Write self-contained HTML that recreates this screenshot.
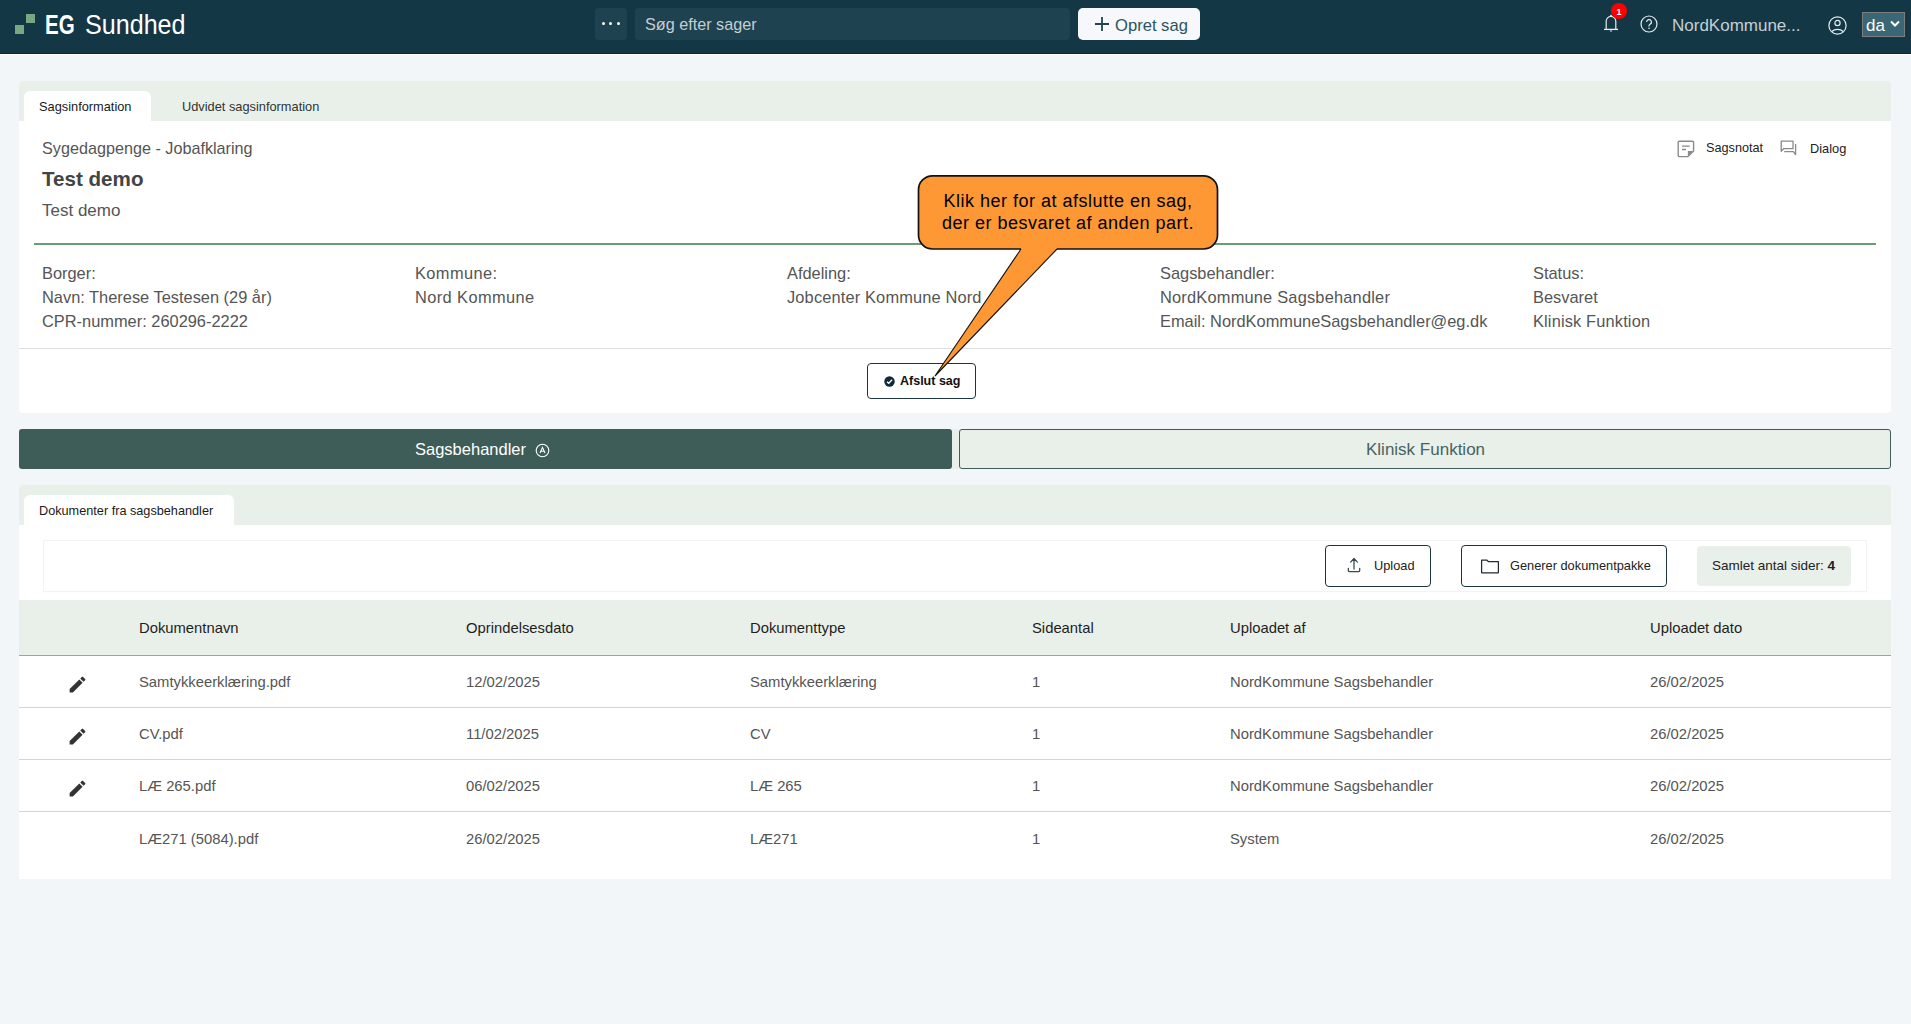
<!DOCTYPE html>
<html><head><meta charset="utf-8">
<style>
*{margin:0;padding:0;box-sizing:border-box}
html,body{width:1911px;height:1024px;overflow:hidden;background:#f2f6f9;font-family:"Liberation Sans",sans-serif;color:#555}
.a{position:absolute;white-space:nowrap}
#hdr{position:absolute;left:0;top:0;width:1911px;height:54px;background:#143746;border-bottom:1px solid #052a38}
#hl{position:absolute;left:0;top:54px;width:1911px;height:1px;background:#fdfeff}
.sq{position:absolute;width:9px;height:9px;background:#78a882}
.card{position:absolute;left:19px;width:1872px;background:#fff;border-radius:4px;overflow:hidden}
.strip{position:absolute;left:0;top:0;width:100%;height:40px;background:#e9f0ea}
.tab{position:absolute;background:#fff;border-radius:6px 6px 0 0}
.t13{font-size:12.8px;line-height:15px}
.t16{font-size:16.4px;line-height:20px}
.th{font-size:14.8px;color:#1e1e1e;line-height:18px}
.td{font-size:14.8px;color:#555;line-height:18px}
.sep{position:absolute;left:0;width:1872px;height:1px;background:#d4d4d4}
</style></head><body>

<div id="hl"></div>
<div id="hdr">
  <div class="sq" style="left:15px;top:25px"></div>
  <div class="sq" style="left:26px;top:14px"></div>
  <div class="a" style="left:45px;top:10px;font-size:27px;line-height:30px;color:#fff;font-weight:bold;transform:scaleX(0.76);transform-origin:0 0">EG</div>
  <div class="a" style="left:85px;top:10px;font-size:27px;line-height:30px;color:#fff;transform:scaleX(0.93);transform-origin:0 0">Sundhed</div>

  <div class="a" style="left:595px;top:8px;width:32px;height:32px;background:#1f4250;border-radius:4px"></div>
  <div class="a" style="left:602px;top:22px;width:3px;height:3px;background:#fff;border-radius:50%"></div>
  <div class="a" style="left:609px;top:22px;width:3px;height:3px;background:#fff;border-radius:50%"></div>
  <div class="a" style="left:617px;top:22px;width:3px;height:3px;background:#fff;border-radius:50%"></div>

  <div class="a" style="left:635px;top:8px;width:435px;height:32px;background:#1f4250;border-radius:4px"></div>
  <div class="a" style="left:645px;top:14px;font-size:16.2px;line-height:20px;color:#c4cfd3">Søg efter sager</div>

  <div class="a" style="left:1078px;top:8px;width:122px;height:32px;background:#f6f8fb;border-radius:5px"></div>
  <svg class="a" style="left:1094px;top:16px" width="16" height="16" viewBox="0 0 16 16"><path d="M8 1v14M1 8h14" stroke="#1e4550" stroke-width="1.8"/></svg>
  <div class="a" style="left:1115px;top:16px;font-size:16.6px;line-height:20px;color:#2c5560">Opret sag</div>

  <!-- bell -->
  <svg class="a" style="left:1602px;top:13px" width="18" height="21" viewBox="0 0 18 21"><path d="M4.2 16.2V8.2a4.8 4.8 0 0 1 9.6 0V16.2" fill="none" stroke="#e6ecee" stroke-width="1.2"/><path d="M2 16.4h14" stroke="#e6ecee" stroke-width="1.3"/><circle cx="9" cy="2.6" r="0.9" fill="#e6ecee"/><path d="M7.6 17.6h2.8L9 19z" fill="#e6ecee"/></svg>
  <div class="a" style="left:1611px;top:3px;width:16px;height:16px;border-radius:50%;background:#fd0000"></div>
  <div class="a" style="left:1611px;top:5px;width:16px;text-align:center;font-size:9px;line-height:14px;color:#fff;font-weight:bold">1</div>
  <!-- help -->
  <svg class="a" style="left:1640px;top:15px" width="18" height="18" viewBox="0 0 18 18"><circle cx="9" cy="9" r="8" fill="none" stroke="#e6ecee" stroke-width="1.2"/><path d="M6.6 7a2.4 2.4 0 1 1 3.4 2.2c-.7.4-1 .8-1 1.6v.6" fill="none" stroke="#e6ecee" stroke-width="1.2"/><circle cx="9" cy="13.3" r=".8" fill="#e6ecee"/></svg>
  <div class="a" style="left:1672px;top:16px;font-size:17px;line-height:20px;color:#c4cfd3">NordKommune...</div>
  <!-- user -->
  <svg class="a" style="left:1828px;top:16px" width="19" height="19" viewBox="0 0 19 19"><circle cx="9.5" cy="9.5" r="8.6" fill="none" stroke="#e6ecee" stroke-width="1.2"/><circle cx="9.5" cy="7" r="2.6" fill="none" stroke="#e6ecee" stroke-width="1.2"/><path d="M4 15.5a6.5 4.5 0 0 1 11 0" fill="none" stroke="#e6ecee" stroke-width="1.2"/></svg>
  <!-- lang -->
  <div class="a" style="left:1862px;top:12px;width:43px;height:25px;background:#3b6676;border:1px solid #7d7d7d"></div>
  <div class="a" style="left:1866px;top:16px;font-size:17px;line-height:20px;color:#fff">da</div>
  <svg class="a" style="left:1890px;top:20px" width="10" height="8" viewBox="0 0 10 8"><path d="M1 1.5l4 4 4-4" fill="none" stroke="#fff" stroke-width="2"/></svg>
</div>

<!-- CARD 1 -->
<div class="card" style="top:81px;height:332px">
  <div class="strip"></div>
  <div class="tab" style="left:5px;top:10px;width:127px;height:30px"></div>
  <div class="a t13" style="left:20px;top:18px;color:#1a1a1a">Sagsinformation</div>
  <div class="a t13" style="left:163px;top:18px;color:#333">Udvidet sagsinformation</div>

  <div class="a" style="left:23px;top:57px;font-size:16.2px;line-height:20px;color:#555">Sygedagpenge - Jobafklaring</div>
  <div class="a" style="left:23px;top:86px;font-size:20.6px;line-height:24px;color:#444;font-weight:bold">Test demo</div>
  <div class="a" style="left:23px;top:120px;font-size:17px;line-height:20px;color:#555">Test demo</div>

  <!-- sagsnotat -->
  <svg class="a" style="left:1658px;top:59px" width="18" height="18" viewBox="0 0 18 18"><path d="M2.5 1.2H15.3a1.3 1.3 0 0 1 1.3 1.3V11L10.9 16.6H2.5a1.3 1.3 0 0 1-1.3-1.3V2.5a1.3 1.3 0 0 1 1.3-1.3z" fill="none" stroke="#8a8a8a" stroke-width="1.4" stroke-linejoin="round"/><path d="M16.6 11H10.9V16.6z" fill="#8a8a8a"/><path d="M5 6.2H12.7M5 9.5H9" stroke="#8a8a8a" stroke-width="1.3"/></svg>
  <div class="a t13" style="left:1687px;top:60px;color:#222;font-size:12.7px">Sagsnotat</div>
  <svg class="a" style="left:1761px;top:59px" width="18" height="18" viewBox="0 0 18 18"><path d="M1.2 1.2H13V8.7H3.6L1.2 11.2Z" fill="none" stroke="#8a8a8a" stroke-width="1.3" stroke-linejoin="round"/><path d="M4.2 11.7H13.4L15.6 14.6V4" fill="none" stroke="#8a8a8a" stroke-width="1.3" stroke-linejoin="round"/></svg>
  <div class="a t13" style="left:1791px;top:60px;color:#222">Dialog</div>

  <div class="a" style="left:15px;top:162px;width:1842px;height:2px;background:#6b9e6e"></div>

  <div class="a t16" style="left:23px;top:180px;line-height:24px">Borger:<br>Navn: Therese Testesen (29 år)<br>CPR-nummer: 260296-2222</div>
  <div class="a t16" style="left:396px;top:180px;line-height:24px;letter-spacing:0.4px">Kommune:<br>Nord Kommune</div>
  <div class="a t16" style="left:768px;top:180px;line-height:24px">Afdeling:<br><span style="letter-spacing:0.15px">Jobcenter Kommune Nord</span></div>
  <div class="a t16" style="left:1141px;top:180px;line-height:24px">Sagsbehandler:<br><span style="letter-spacing:0.2px">NordKommune Sagsbehandler</span><br>Email: NordKommuneSagsbehandler@eg.dk</div>
  <div class="a t16" style="left:1514px;top:180px;line-height:24px">Status:<br>Besvaret<br><span style="letter-spacing:0.15px">Klinisk Funktion</span></div>

  <div class="a" style="left:0;top:267px;width:1872px;height:1px;background:#dde0e3"></div>

  <div class="a" style="left:848px;top:282px;width:109px;height:36px;border:1px solid #1b3440;border-radius:4px;background:#fff"></div>
  <svg class="a" style="left:865px;top:295px" width="11" height="11" viewBox="0 0 11 11"><circle cx="5.5" cy="5.5" r="5.2" fill="#0f2a35"/><path d="M3 5.7l1.7 1.6 3.4-3.5" fill="none" stroke="#fff" stroke-width="1.3"/></svg>
  <div class="a" style="left:881px;top:293px;font-size:12.5px;line-height:15px;color:#111;font-weight:bold">Afslut sag</div>
</div>

<!-- toggle buttons -->
<div class="a" style="left:19px;top:429px;width:1872px;height:40px;background:#e9f0ea;border-radius:3px"></div>
<div class="a" style="left:19px;top:429px;width:933px;height:40px;background:#3f5d58;border-radius:3px"></div>
<div class="a" style="left:415px;top:439px;font-size:16.5px;line-height:20px;color:#fff">Sagsbehandler</div>
<svg class="a" style="left:535px;top:443px" width="15" height="15" viewBox="0 0 15 15"><circle cx="7.5" cy="7.5" r="6.3" fill="none" stroke="#fff" stroke-width="1.1"/><path d="M5 10l2.5-5.5L10 10M5.9 8.3h3.2" fill="none" stroke="#fff" stroke-width="1.1"/></svg>
<div class="a" style="left:959px;top:429px;width:932px;height:40px;background:#e9f0ea;border:1px solid #3f5d58;border-radius:3px"></div>
<div class="a" style="left:1366px;top:440px;font-size:17px;line-height:20px;color:#47635f">Klinisk Funktion</div>

<!-- CARD 2 -->
<div class="card" style="top:485px;height:394px;border-radius:4px 4px 0 0">
  <div class="strip"></div>
  <div class="tab" style="left:5px;top:10px;width:210px;height:30px"></div>
  <div class="a t13" style="left:20px;top:19px;color:#1a1a1a;font-size:12.7px">Dokumenter fra sagsbehandler</div>

  <div class="a" style="left:24px;top:55px;width:1824px;height:52px;border:1px solid #f1f4f7"></div>

  <div class="a" style="left:1306px;top:60px;width:106px;height:42px;border:1px solid #1b3440;border-radius:4px"></div>
  <svg class="a" style="left:1327px;top:71px" width="16" height="17" viewBox="0 0 16 17"><path d="M8 2.6V13M4.6 6.1L8 2.5l3.4 3.6M2.3 12.3v2.2a1 1 0 0 0 1 1h9.4a1 1 0 0 0 1-1v-2.2" fill="none" stroke="#34484e" stroke-width="1.25" stroke-linecap="round" stroke-linejoin="round"/></svg>
  <div class="a t13" style="left:1355px;top:73px;color:#222">Upload</div>

  <div class="a" style="left:1442px;top:60px;width:206px;height:42px;border:1px solid #1b3440;border-radius:4px"></div>
  <svg class="a" style="left:1461px;top:74px" width="20" height="15" viewBox="0 0 20 15"><path d="M1.6 1.2H7l1.6 1.5h9.8v10.6a.6.6 0 0 1-.6.6H2.2a.6.6 0 0 1-.6-.6z" fill="none" stroke="#1f2d33" stroke-width="1.25" stroke-linejoin="round"/></svg>
  <div class="a t13" style="left:1491px;top:73px;color:#222">Generer dokumentpakke</div>

  <div class="a" style="left:1678px;top:61px;width:154px;height:40px;background:#e9f0ea;border-radius:4px"></div>
  <div class="a t13" style="left:1693px;top:73px;color:#222;font-size:13.5px">Samlet antal sider: <b>4</b></div>

  <div class="a" style="left:0;top:115px;width:1872px;height:56px;background:#e9f0ea;border-bottom:1px solid #8cb08f"></div>
  <div class="a th" style="left:120px;top:134px">Dokumentnavn</div>
  <div class="a th" style="left:447px;top:134px">Oprindelsesdato</div>
  <div class="a th" style="left:731px;top:134px">Dokumenttype</div>
  <div class="a th" style="left:1013px;top:134px">Sideantal</div>
  <div class="a th" style="left:1211px;top:134px">Uploadet af</div>
  <div class="a th" style="left:1631px;top:134px">Uploadet dato</div>

  <div class="sep" style="top:222px"></div>
  <div class="sep" style="top:274px"></div>
  <div class="sep" style="top:326px"></div>
  <svg class="a" style="left:48px;top:189px" width="21" height="21" viewBox="0 0 24 24"><path d="M3 17.25V21h3.75L17.81 9.94l-3.75-3.75L3 17.25zM20.71 7.04a1 1 0 0 0 0-1.41l-2.34-2.34a1 1 0 0 0-1.41 0l-1.83 1.83 3.75 3.75 1.83-1.83z" fill="#333"/></svg>
  <div class="a td" style="left:120px;top:188px">Samtykkeerklæring.pdf</div>
  <div class="a td" style="left:447px;top:188px">12/02/2025</div>
  <div class="a td" style="left:731px;top:188px">Samtykkeerklæring</div>
  <div class="a td" style="left:1013px;top:188px">1</div>
  <div class="a td" style="left:1211px;top:188px">NordKommune Sagsbehandler</div>
  <div class="a td" style="left:1631px;top:188px">26/02/2025</div>
  <svg class="a" style="left:48px;top:241px" width="21" height="21" viewBox="0 0 24 24"><path d="M3 17.25V21h3.75L17.81 9.94l-3.75-3.75L3 17.25zM20.71 7.04a1 1 0 0 0 0-1.41l-2.34-2.34a1 1 0 0 0-1.41 0l-1.83 1.83 3.75 3.75 1.83-1.83z" fill="#333"/></svg>
  <div class="a td" style="left:120px;top:240px">CV.pdf</div>
  <div class="a td" style="left:447px;top:240px">11/02/2025</div>
  <div class="a td" style="left:731px;top:240px">CV</div>
  <div class="a td" style="left:1013px;top:240px">1</div>
  <div class="a td" style="left:1211px;top:240px">NordKommune Sagsbehandler</div>
  <div class="a td" style="left:1631px;top:240px">26/02/2025</div>
  <svg class="a" style="left:48px;top:293px" width="21" height="21" viewBox="0 0 24 24"><path d="M3 17.25V21h3.75L17.81 9.94l-3.75-3.75L3 17.25zM20.71 7.04a1 1 0 0 0 0-1.41l-2.34-2.34a1 1 0 0 0-1.41 0l-1.83 1.83 3.75 3.75 1.83-1.83z" fill="#333"/></svg>
  <div class="a td" style="left:120px;top:292px">LÆ 265.pdf</div>
  <div class="a td" style="left:447px;top:292px">06/02/2025</div>
  <div class="a td" style="left:731px;top:292px">LÆ 265</div>
  <div class="a td" style="left:1013px;top:292px">1</div>
  <div class="a td" style="left:1211px;top:292px">NordKommune Sagsbehandler</div>
  <div class="a td" style="left:1631px;top:292px">26/02/2025</div>
  <div class="a td" style="left:120px;top:345px">LÆ271 (5084).pdf</div>
  <div class="a td" style="left:447px;top:345px">26/02/2025</div>
  <div class="a td" style="left:731px;top:345px">LÆ271</div>
  <div class="a td" style="left:1013px;top:345px">1</div>
  <div class="a td" style="left:1211px;top:345px">System</div>
  <div class="a td" style="left:1631px;top:345px">26/02/2025</div>
</div>
<!-- callout -->
<svg class="a" style="left:0;top:0" width="1911" height="1024" viewBox="0 0 1911 1024">
  <path d="M932.5 175.8 H1203.5 A14 14 0 0 1 1217.5 189.8 V235 A14 14 0 0 1 1203.5 249 H1057 L935 376 L1021 249 H932.5 A14 14 0 0 1 918.5 235 V189.8 A14 14 0 0 1 932.5 175.8 Z" fill="#fe9834"/>
  <path d="M1057 249 H1203.5 A14 14 0 0 0 1217.5 235 V189.8 A14 14 0 0 0 1203.5 175.8 H932.5 A14 14 0 0 0 918.5 189.8 V235 A14 14 0 0 0 932.5 249 H1021" fill="none" stroke="#111" stroke-width="1.7"/>
  <path d="M1021 249 L935 376 L1057 249" fill="none" stroke="#111" stroke-width="1.1" stroke-linejoin="miter"/>
  <text x="1068" y="206.5" text-anchor="middle" font-family="Liberation Sans" font-size="18" letter-spacing="0.5" fill="#000">Klik her for at afslutte en sag,</text>
  <text x="1068" y="228.5" text-anchor="middle" font-family="Liberation Sans" font-size="18" letter-spacing="0.5" fill="#000">der er besvaret af anden part.</text>
</svg>
</body></html>
